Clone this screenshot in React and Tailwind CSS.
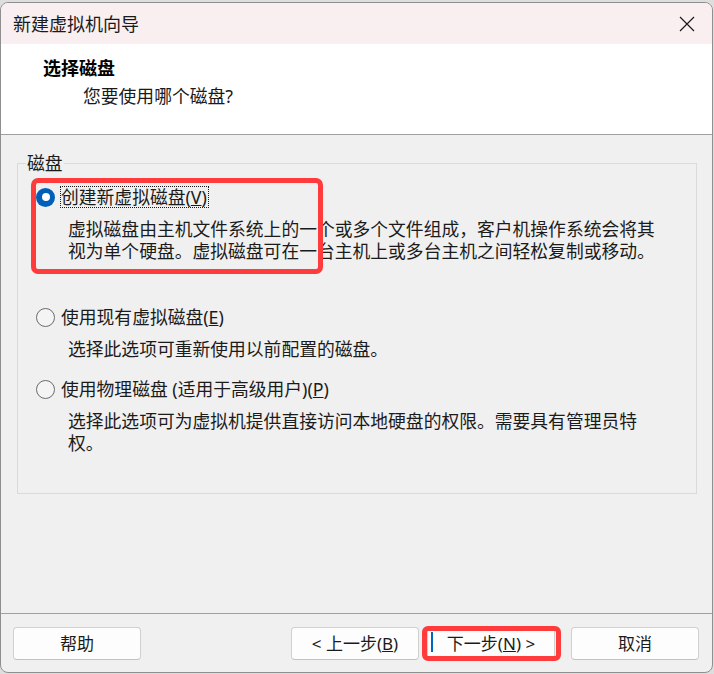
export default function App() {
  const font = "font-['Noto_Sans','Noto_Sans_CJK_SC',sans-serif]";
  const Radio = ({ checked }) =>
    checked ? (
      <span className="flex h-[19px] w-[19px] shrink-0 items-center justify-center rounded-full bg-[#005fb8]">
        <span className="h-[8px] w-[8px] rounded-full bg-white" />
      </span>
    ) : (
      <span className="h-[19px] w-[19px] shrink-0 rounded-full border border-[#6a6a6a] bg-[#f4f4f4]" />
    );
  const btn =
    "relative flex h-[33px] w-[128px] items-center justify-center rounded-[4px] border border-[#d0d0d0] border-b-[#c2c2c2] bg-[#fdfdfd] text-[17px] leading-[22px] text-[#1b1b1b]";
  return (
    <div className={`relative h-[674px] w-[714px] overflow-hidden bg-[#dedede] ${font} text-[#1b1b1b]`}>
      <div className="mt-[2px] flex h-[671px] w-[713px] flex-col overflow-hidden rounded-[8px] border border-[#8f8f8f] bg-[#f0f0f0]">
        {/* title bar */}
        <div className="flex h-[41px] shrink-0 items-center justify-between bg-[#f9eef0]">
          <span className="pl-[12px] text-[18px] leading-[24px] text-[#1a1a1a]">新建虚拟机向导</span>
          <span className="flex h-full w-[50px] items-center justify-center">
            <svg width="16" height="16" viewBox="0 0 16 16">
              <path d="M1 1 L15 15 M15 1 L1 15" stroke="#1a1a1a" strokeWidth="1.2" fill="none" />
            </svg>
          </span>
        </div>
        {/* header */}
        <div className="h-[90px] shrink-0 bg-white pt-[12px]">
          <div className="pl-[42px] text-[18px] font-bold leading-[24px] text-black">选择磁盘</div>
          <div className="mt-[4px] pl-[82px] text-[17.8px] leading-[24px] text-[#1a1a1a]">您要使用哪个磁盘?</div>
        </div>
        <div className="h-px shrink-0 bg-[#a0a0a0]" />
        {/* content */}
        <div className="flex-1 px-[16px] pt-[28px]">
          <div className="relative h-[331px] w-[680px] border border-[#dadada] pt-[22px]">
            <span className="absolute -top-[12px] left-[8px] bg-[#f0f0f0] px-[1px] text-[17.8px] leading-[22px]">磁盘</span>
            <div className="flex h-[22px] items-center pl-[18px]">
              <Radio checked />
              <span className="ml-[5px] border border-dotted border-[#1a1a1a] pr-[1px] text-[17.8px] leading-[20px]">
                创建新虚拟磁盘(<span className="underline">V</span>)
              </span>
            </div>
            <div className="mt-[10px] pl-[50px] text-[17.8px] leading-[22px]">
              <div className="whitespace-nowrap">虚拟磁盘由主机文件系统上的一个或多个文件组成，客户机操作系统会将其</div>
              <div className="whitespace-nowrap">视为单个硬盘。虚拟磁盘可在一台主机上或多台主机之间轻松复制或移动。</div>
            </div>
            <div className="mt-[44px] flex h-[22px] items-center pl-[18px]">
              <Radio />
              <span className="ml-[5px] border border-transparent text-[17.8px] leading-[20px]">
                使用现有虚拟磁盘(<span className="underline">E</span>)
              </span>
            </div>
            <div className="mt-[10px] pl-[50px] text-[17.8px] leading-[22px]">
              <div className="whitespace-nowrap">选择此选项可重新使用以前配置的磁盘。</div>
            </div>
            <div className="mt-[18px] flex h-[22px] items-center pl-[18px]">
              <Radio />
              <span className="ml-[5px] border border-transparent text-[17.8px] leading-[20px]">
                使用物理磁盘 (适用于高级用户)(<span className="underline">P</span>)
              </span>
            </div>
            <div className="mt-[10px] pl-[50px] text-[17.8px] leading-[22px]">
              <div className="whitespace-nowrap">选择此选项可为虚拟机提供直接访问本地硬盘的权限。需要具有管理员特</div>
              <div className="whitespace-nowrap">权。</div>
            </div>
          </div>
        </div>
        <div className="h-px shrink-0 bg-[#a0a0a0]" />
        {/* footer */}
        <div className="flex h-[58px] shrink-0 items-start justify-between pl-[12px] pr-[13px] pt-[13px]">
          <button className={`${btn} w-[127px]`}>帮助</button>
          <div className="flex">
            <button className={btn}>
              &lt; 上一步(<span className="underline">B</span>)
            </button>
            <button className={`${btn} ml-[8px]`}>
              <span className="absolute bottom-[7px] left-[3px] top-[4px] w-[2px] bg-[#0067c0]" />
              下一步(<span className="underline">N</span>) &gt;
            </button>
            <button className={`${btn} ml-[16px]`}>取消</button>
          </div>
        </div>
      </div>
      {/* red annotation boxes */}
      <div className="pointer-events-none absolute left-[31px] top-[178px] h-[96px] w-[292px] rounded-[7px] border-[5px] border-[#ff3b3b]" />
      <div className="pointer-events-none absolute left-[422px] top-[626px] h-[35px] w-[139px] rounded-[6px] border-[5px] border-[#ff3b3b]" />
    </div>
  );
}
